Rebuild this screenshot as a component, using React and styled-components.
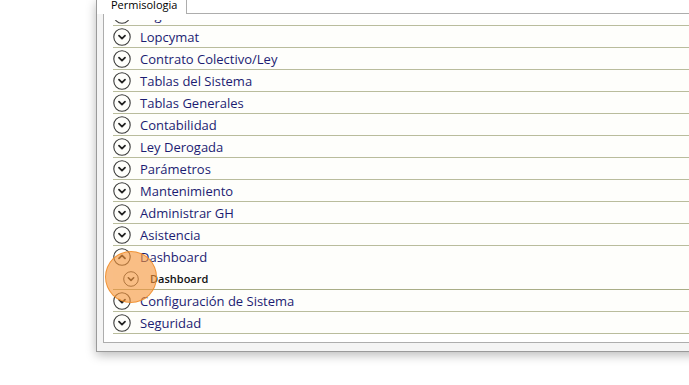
import styled, { createGlobalStyle } from "styled-components";

const GlobalStyle = createGlobalStyle`
  html, body {
    margin: 0;
    padding: 0;
    background: #ffffff;
    overflow: hidden;
  }
  body {
    width: 689px;
    height: 385px;
  }
`;

const modules = [
  "Seguro Social",
  "Lopcymat",
  "Contrato Colectivo/Ley",
  "Tablas del Sistema",
  "Tablas Generales",
  "Contabilidad",
  "Ley Derogada",
  "Parámetros",
  "Mantenimiento",
  "Administrar GH",
  "Asistencia",
];

const Chevron = ({ up, size = 18 }) => (
  <svg width={size} height={size} viewBox="0 0 18 18">
    <circle cx="9" cy="9" r="8.2" fill="none" stroke="#3a3a3a" strokeWidth="1.1" />
    <path
      d={up ? "M6 10.4 L9 7.4 L12 10.4" : "M6 7.6 L9 10.6 L12 7.6"}
      fill="none"
      stroke="#222"
      strokeWidth="1.8"
      strokeLinecap="round"
      strokeLinejoin="round"
    />
  </svg>
);

const App = () => {
  return (
    <>
      <GlobalStyle />
      <Window>
        <TabStrip>
          <Tab>Permisologia</Tab>
          <TabFiller />
        </TabStrip>
        <TabPage>
          <Viewport>
            {modules.map((name, i) => (
              <Row key={name} $first={i === 0}>
                <Chevron />
                <Label>{name}</Label>
              </Row>
            ))}
            <Row $open>
              <Chevron up />
              <Label>Dashboard</Label>
            </Row>
            <ChildRow>
              <Chevron size={16} />
              <ChildLabel>Dashboard</ChildLabel>
            </ChildRow>
            <Row>
              <Chevron />
              <Label>Configuración de Sistema</Label>
            </Row>
            <Row>
              <Chevron />
              <Label>Seguridad</Label>
            </Row>
          </Viewport>
          <ClickMark />
        </TabPage>
      </Window>
    </>
  );
};

const Window = styled.div`
  margin-left: 96px;
  width: 640px;
  background: #f4f4f4;
  border-left: 1px solid #9a9a9a;
  border-bottom: 1px solid #9a9a9a;
  box-shadow: 0 3px 10px rgba(0, 0, 0, 0.28);
  font-family: "Open Sans", "Noto Sans", sans-serif;
`;

const TabStrip = styled.div`
  display: flex;
  height: 14px;
  background: #ffffff;
`;

const Tab = styled.div`
  width: 89px;
  margin-left: 1px;
  height: 14px;
  background: #ffffff;
  border-right: 1px solid #adadad;
  box-sizing: border-box;
  padding-left: 13px;
  font-size: 11px;
  line-height: 10px;
  color: #000;
  overflow: hidden;
`;

const TabFiller = styled.div`
  flex: 1;
  border-bottom: 1px solid #adadad;
  box-sizing: border-box;
  height: 14px;
`;

const TabPage = styled.div`
  position: relative;
  display: flex;
  flex-direction: column;
  margin-left: 6px;
  margin-bottom: 8px;
  height: 329px;
  box-sizing: border-box;
  padding-top: 6px;
  background: #ffffff;
  border-left: 1px solid #adadad;
  border-bottom: 1px solid #adadad;
`;

const Viewport = styled.div`
  flex: 1;
  overflow: hidden;
  padding-left: 9px;
  display: flex;
  flex-direction: column;
`;

const Row = styled.div`
  flex: none;
  display: flex;
  align-items: center;
  gap: 9px;
  height: 21px;
  margin-top: ${(p) => (p.$first ? "-16px" : "0")};
  border-bottom: 1px solid ${(p) => (p.$open ? "transparent" : "#b9bc9c")};
  background: #fefefb;
`;

const Label = styled.span`
  font-size: 13px;
  color: #1c1c72;
  line-height: 1;
  padding-top: 1px;
`;

const ChildRow = styled.div`
  flex: none;
  display: flex;
  align-items: center;
  gap: 11px;
  height: 21px;
  padding-left: 10px;
  border-bottom: 1px solid #a9ad86;
  background: #fefefb;
`;

const ChildLabel = styled.span`
  font-size: 11px;
  font-weight: 600;
  color: #111;
  line-height: 1;
`;

/* orange click highlight drawn over the list */
const ClickMark = styled.div`
  position: absolute;
  left: 1px;
  top: 237px;
  width: 52px;
  height: 52px;
  border-radius: 50%;
  background: rgba(246, 150, 60, 0.62);
  border: 1.5px solid rgba(240, 140, 40, 0.85);
  box-sizing: border-box;
  pointer-events: none;
`;

export default App;
